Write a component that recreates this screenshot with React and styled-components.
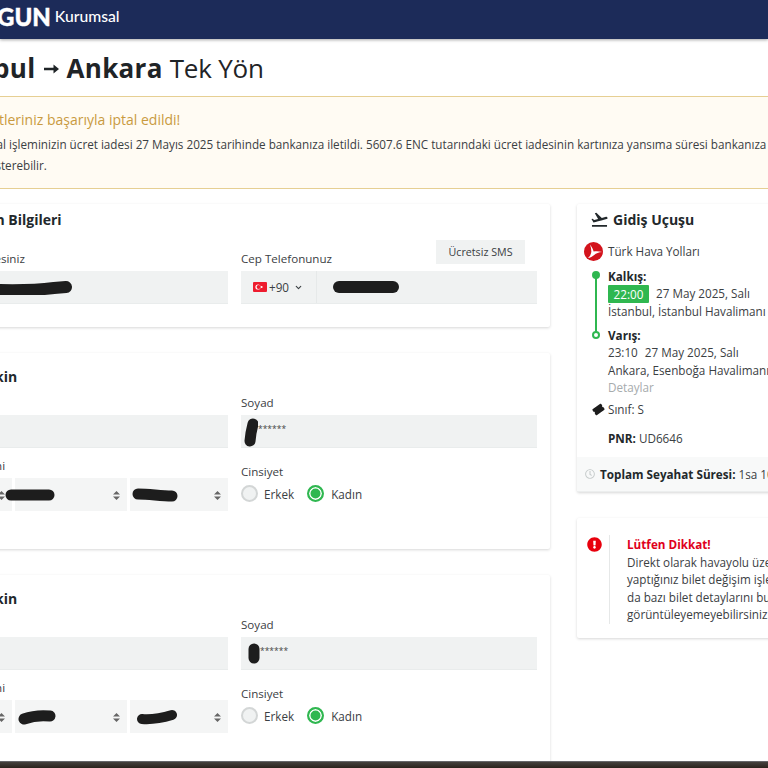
import React from "react";
import styled, { createGlobalStyle } from "styled-components";
import { MdFlightTakeoff } from "react-icons/md";
import { FaRegClock, FaExclamationCircle } from "react-icons/fa";
import { FaTicketSimple } from "react-icons/fa6";
import { LuChevronDown } from "react-icons/lu";

const Global = createGlobalStyle`
  html, body { margin: 0; padding: 0; background: #fff; }
  body { font-family: "Open Sans", "Noto Sans", sans-serif; color: #333a3d; }
`;

const Viewport = styled.div`
  position: relative;
  width: 768px;
  height: 768px;
  overflow: hidden;
  background: #fff;
`;

const Header = styled.header`
  height: 39px;
  box-sizing: border-box;
  padding-bottom: 7px;
  background: #1c2b59;
  box-shadow: 0 1px 3px rgba(0, 0, 0, 0.35);
  display: flex;
  align-items: center;
  overflow: hidden;
`;

const Brand = styled.span`
  font-family: "Lato", sans-serif;
  font-weight: 900;
  font-size: 24px;
  color: #fff;
  margin-left: -3px;
  -webkit-text-stroke: 0.4px #fff;
`;

const BrandSub = styled.span`
  font-family: "Lato", sans-serif;
  font-weight: 500;
  font-size: 15.7px;
  color: #fff;
  margin-left: 4px;
`;

const TitleBar = styled.div`
  height: 57px;
  display: flex;
  align-items: center;
  margin-left: -74px;
  white-space: nowrap;
  font-size: 26px;
  color: #1f2427;
`;

const Strong = styled.strong`
  font-weight: 700;
  letter-spacing: 0.3px;
`;

const RouteArrow = styled.svg`
  width: 15px;
  height: 10px;
  margin: 2px 8px 0;
  flex: none;
`;

const Light = styled.span`
  margin-left: 7px;
  letter-spacing: -0.2px;
`;

const Notice = styled.section`
  box-sizing: border-box;
  height: 93px;
  border-top: 1px solid #e6cf93;
  border-bottom: 1px solid #e6cf93;
  background: #fffbf3;
  white-space: nowrap;
  overflow: hidden;
`;

const NoticeTitle = styled.div`
  font-size: 14px;
  line-height: 20px;
  color: #c99a3f;
  margin: 13px 0 4px -25px;
`;

const NoticeText = styled.div`
  font-size: 11.7px;
  line-height: 21px;
  color: #3b4043;
  margin-left: -18px;
`;

const Columns = styled.div`
  display: flex;
  align-items: flex-start;
  margin: 15px 0 0 -81px;
  gap: 27px;
  width: 1000px;
`;

const Left = styled.div`
  width: 631px;
  display: flex;
  flex-direction: column;
  gap: 26px;
  flex: none;
`;

const Right = styled.aside`
  width: 300px;
  flex: none;
  display: flex;
  flex-direction: column;
  gap: 26px;
`;

const Card = styled.div`
  background: #fff;
  box-shadow: 0 1px 3px rgba(0, 0, 0, 0.16);
  border-radius: 2px;
`;

const FormCard = styled(Card)`
  padding: ${(p) => p.$padTop}px 13px 0;
  height: ${(p) => p.$h}px;
  box-sizing: border-box;
`;

const CardTitle = styled.h3`
  margin: 0 0 0 ${(p) => p.$indent || 0}px;
  font-size: 14px;
  line-height: 20px;
  font-weight: 700;
  color: #22282b;
  white-space: nowrap;
`;

const Grid = styled.div`
  display: grid;
  grid-template-columns: 296px 296px;
  column-gap: 13px;
  align-items: end;
  margin-top: ${(p) => p.$top || 0}px;
`;

const LabelRow = styled.div`
  display: flex;
  align-items: flex-end;
  justify-content: space-between;
  height: ${(p) => p.$h || 31}px;
`;

const Label = styled.label`
  display: block;
  font-size: 11.6px;
  line-height: 16px;
  color: #3b4043;
  margin-bottom: ${(p) => p.$mb ?? 4}px;
`;

const SmsButton = styled.button`
  width: 89px;
  height: 24px;
  margin: 0 12px 7px 0;
  border: 0;
  padding: 0;
  background: #f0f2f2;
  font: 400 10.7px "Open Sans", sans-serif;
  color: #3b4043;
`;

const Input = styled.div`
  height: 33px;
  box-sizing: border-box;
  background: #f0f2f2;
  border-bottom: 1px solid #e9ecec;
  display: flex;
  align-items: center;
  padding-left: ${(p) => p.$pad ?? 0}px;
  font-size: 11.7px;
  color: #3b4043;
`;

const Dial = styled.div`
  width: 76px;
  height: 100%;
  box-sizing: border-box;
  padding-left: 12px;
  display: flex;
  align-items: center;
  gap: 2px;
  border-right: 1px solid #e6e9e9;
  flex: none;
`;

const DialChevron = styled(LuChevronDown)`
  margin-left: 3px;
`;

const PhoneMask = styled.div`
  margin-left: 16px;
  display: flex;
`;

const Stars = styled.span`
  font-size: 8.5px;
  color: #444;
  align-self: flex-start;
  margin-top: 8px;
`;

const SelectRow = styled.div`
  display: grid;
  grid-template-columns: 80px 112px 98px;
  column-gap: 3px;
`;

const Select = styled.div`
  position: relative;
  height: 33px;
  background: #f4f5f5;
  display: flex;
  align-items: center;
`;

const Updown = styled.svg`
  position: absolute;
  right: 7px;
  top: 13px;
  width: 7px;
  height: 9px;
`;

const Radios = styled.div`
  display: flex;
  align-items: center;
  height: 31px;
  margin-bottom: 2px;
  font-size: 11.7px;
  color: #3b4043;
`;

const Radio = styled.span`
  width: 17px;
  height: 17px;
  border-radius: 50%;
  box-sizing: border-box;
  border: 2px solid ${(p) => (p.$on ? "#2fb750" : "#d3d6d6")};
  background: ${(p) => (p.$on ? "#2fb750" : "#f0f2f2")};
  box-shadow: ${(p) => (p.$on ? "inset 0 0 0 1.5px #fff" : "none")};
  margin-right: ${(p) => (p.$on ? 7 : 6)}px;
  flex: none;
`;

const RadioText = styled.span`
  margin-right: 13px;
`;

const Flight = styled(Card)`
  padding-top: 5px;
  height: 288px;
  box-sizing: border-box;
  display: flex;
  flex-direction: column;
  font-size: 11.7px;
  color: #3b4043;
  white-space: nowrap;
`;

const FlightHead = styled.div`
  display: flex;
  align-items: center;
  height: 20px;
  padding-left: 13px;
  gap: 4px;
  font-size: 14px;
  font-weight: 700;
  color: #22282b;
`;

const Airline = styled.div`
  display: flex;
  align-items: center;
  height: 20px;
  margin-top: 12px;
  padding-left: 7px;
  gap: 5px;
`;

const Timeline = styled.div`
  display: grid;
  grid-template-columns: 31px 1fr;
  margin-top: 7px;
`;

const Rail = styled.div`
  position: relative;
  height: 74px;
`;

const RailLine = styled.span`
  position: absolute;
  left: 18px;
  top: 7px;
  width: 2px;
  height: 58px;
  background: #2fb750;
`;

const RailDot = styled.span`
  position: absolute;
  left: 15px;
  width: 8px;
  height: 8px;
  border-radius: 50%;
  box-sizing: border-box;
  top: ${(p) => p.$top}px;
  border: 2px solid #2fb750;
  background: ${(p) => (p.$fill ? "#2fb750" : "#fff")};
`;

const Stop = styled.div`
  line-height: 17.5px;
`;

const StopTitle = styled.div`
  font-weight: 700;
  color: #22282b;
  line-height: 17px;
`;

const TimeLine = styled.div`
  display: flex;
  align-items: center;
  gap: 7px;
  min-height: 18px;
`;

const TimeBadge = styled.span`
  width: 41px;
  height: 18px;
  line-height: 18px;
  background: #2fb750;
  color: #fff;
  text-align: center;
  border-radius: 1px;
`;

const StopGap = styled.div`
  height: 6px;
`;

const Muted = styled.div`
  color: #a6abad;
  line-height: 17px;
`;

const ClassRow = styled.div`
  display: flex;
  align-items: center;
  height: 18px;
  margin-top: 4px;
  padding-left: 16px;
  gap: 4px;
`;

const TicketIcon = styled(FaTicketSimple)`
  transform: rotate(-35deg);
  color: #1d1d1d;
`;

const Pnr = styled.div`
  margin-top: 11px;
  padding-left: 31px;
  line-height: 18px;
`;

const Bold = styled.strong`
  font-weight: 700;
  color: #22282b;
`;

const FlightFoot = styled.div`
  margin-top: auto;
  height: 35px;
  box-sizing: border-box;
  background: #f8f9f9;
  display: flex;
  align-items: center;
  padding-left: 8px;
  gap: 5px;
  border-bottom: 1px solid #eceeee;
`;

const Warning = styled(Card)`
  height: 120px;
  box-sizing: border-box;
  padding: 17px 0 0 10px;
  display: flex;
  align-items: flex-start;
  font-size: 11.7px;
  color: #3b4043;
  white-space: nowrap;
`;

const WarnIcon = styled.div`
  width: 23px;
  padding-top: 2px;
  color: #e8000d;
  display: flex;
  height: 89px;
  box-sizing: border-box;
  border-right: 1px solid #e6e8e8;
  flex: none;
`;

const WarnBody = styled.div`
  margin: 1px 0 0 17px;
  line-height: 17.6px;
`;

const WarnTitle = styled.div`
  color: #e0001b;
  font-weight: 700;
`;

const Strip = styled.div`
  position: absolute;
  left: 0;
  right: 0;
  bottom: 0;
  height: 7px;
  box-sizing: border-box;
  background: linear-gradient(180deg, #45413d 0%, #3a3531 40%, #2b231c 100%);
  border-top: 1px solid #66666a;
`;

const MaskSvg = styled.svg`
  display: block;
  flex: none;
  margin-left: ${(p) => p.$ml || 0}px;
`;

const Scribble = ({ w, h, d, sw = 12, ml }) => (
  <MaskSvg $ml={ml} width={w} height={h} viewBox={`0 0 ${w} ${h}`}>
    <path d={d} fill="none" stroke="#1d1d1d" strokeWidth={sw} strokeLinecap="round" strokeLinejoin="round" />
  </MaskSvg>
);

const Arrows = () => (
  <Updown viewBox="0 0 7 9">
    <path d="M3.5 0 7 3.4H0zM3.5 9 0 5.6h7z" fill="#666" />
  </Updown>
);

const Flag = () => (
  <svg width="14" height="10" viewBox="0 0 14 10" style={{ flex: "none" }}>
    <rect width="14" height="10" rx="1" fill="#ee1c2e" />
    <circle cx="5" cy="5" r="2.6" fill="#fff" />
    <circle cx="5.7" cy="5" r="2.1" fill="#ee1c2e" />
    <circle cx="8.6" cy="5" r="1" fill="#fff" />
  </svg>
);

const ThyLogo = () => (
  <svg width="19" height="19" viewBox="0 0 19 19" style={{ flex: "none" }}>
    <circle cx="9.5" cy="9.5" r="9.5" fill="#d3131c" />
    <path d="M6 2.500c2 2.800 3.200 5 3.600 7 2.800-.5 5.800-.3 8.600.6-3.500.3-6 1.200-8 2.900-1.800 1.500-3.700 2.700-6.400 3.100 1.900-1.700 3.300-3.500 3.500-6 .1-2.500-.4-5-1.300-7.600z" fill="#fff" />
  </svg>
);

const Passenger = ({ title, monthMask, yearMask, soyadMask }) => (
  <FormCard $h={196} $padTop={14}>
    <CardTitle $indent={13}>{title}</CardTitle>
    <Grid $top={8}>
      <div>
        <Label>Ad</Label>
        <Input />
      </div>
      <div>
        <Label>Soyad</Label>
        <Input $pad={2}>
          {soyadMask}
          <Stars>******</Stars>
        </Input>
      </div>
    </Grid>
    <Grid $top={10}>
      <div>
        <LabelRow $h={20}>
          <Label $mb={4}>Doğum Tarihi</Label>
        </LabelRow>
        <SelectRow>
          <Select>
            <Arrows />
          </Select>
          <Select>{monthMask}<Arrows /></Select>
          <Select>{yearMask}<Arrows /></Select>
        </SelectRow>
      </div>
      <div>
        <Label $mb={-2}>Cinsiyet</Label>
        <Radios>
          <Radio />
          <RadioText>Erkek</RadioText>
          <Radio $on />
          <RadioText>Kadın</RadioText>
        </Radios>
      </div>
    </Grid>
  </FormCard>
);

export default function App() {
  return (
    <Viewport>
      <Global />
      <Header>
        <Brand>GUN</Brand>
        <BrandSub>Kurumsal</BrandSub>
      </Header>
      <TitleBar>
        <Strong>İstanbul</Strong>
        <RouteArrow viewBox="0 0 15 10">
          <path d="M0 3.800h9.500V0.500L15 5l-5.500 4.500V6.200H0z" fill="#1f2427" />
        </RouteArrow>
        <Strong>Ankara</Strong>
        <Light>Tek Yön</Light>
      </TitleBar>
      <Notice>
        <NoticeTitle>Biletleriniz başarıyla iptal edildi!</NoticeTitle>
        <NoticeText>
          İptal işleminizin ücret iadesi 27 Mayıs 2025 tarihinde bankanıza iletildi. 5607.6 ENC tutarındaki ücret iadesinin kartınıza yansıma süresi bankanıza göre değişiklik
          <br />
          gösterebilir.
        </NoticeText>
      </Notice>
      <Columns>
        <Left>
          <FormCard $h={123} $padTop={6}>
            <CardTitle $indent={7}>Yolcunun Bilgileri</CardTitle>
            <Grid $top={10}>
              <div>
                <LabelRow $h={31}>
                  <Label>E-Posta Adresiniz</Label>
                </LabelRow>
                <Input $pad={36}>
                  <Scribble w={104} h={16} d="M6 10 C40 12 70 11 86 9 L98 8" sw={12} />
                </Input>
              </div>
              <div>
                <LabelRow $h={31}>
                  <Label>Cep Telefonunuz</Label>
                  <SmsButton>Ücretsiz SMS</SmsButton>
                </LabelRow>
                <Input>
                  <Dial>
                    <Flag />
                    +90
                    <DialChevron size={9} strokeWidth={3} />
                  </Dial>
                  <PhoneMask>
                    <Scribble w={66} h={14} d="M6 7 L60 7" sw={12} />
                  </PhoneMask>
                </Input>
              </div>
            </Grid>
          </FormCard>
          <Passenger
            title="1. Yetişkin"
            soyadMask={<Scribble w={15} h={33} d="M10 9 L8 18 L7 26" sw={11} />}
            monthMask={<Scribble w={50} h={14} d="M6 7 L44 7" sw={11} ml={-10} />}
            yearMask={<Scribble w={46} h={14} d="M6 6 C18 6 28 8 40 8" sw={11} ml={2} />}
          />
          <Passenger
            title="2. Yetişkin"
            soyadMask={<Scribble w={15} h={33} d="M9 12 L9 21" sw={11} ml={2} />}
            monthMask={<Scribble w={38} h={16} d="M6 10 C14 7 22 6 32 7" sw={11} ml={3} />}
            yearMask={<Scribble w={42} h={16} d="M6 10 C18 11 26 9 36 6" sw={10} ml={6} />}
          />
        </Left>
        <Right>
          <Flight>
            <FlightHead>
              <MdFlightTakeoff size={19} color="#22282b" />
              <span>Gidiş Uçuşu</span>
            </FlightHead>
            <Airline>
              <ThyLogo />
              Türk Hava Yolları
            </Airline>
            <Timeline>
              <Rail>
                <RailLine />
                <RailDot $top={3} $fill />
                <RailDot $top={63} />
              </Rail>
              <div>
                <Stop>
                  <StopTitle>Kalkış:</StopTitle>
                  <TimeLine>
                    <TimeBadge>22:00</TimeBadge>
                    <span>27 May 2025, Salı</span>
                  </TimeLine>
                  <div>İstanbul, İstanbul Havalimanı</div>
                </Stop>
                <StopGap />
                <Stop>
                  <StopTitle>Varış:</StopTitle>
                  <TimeLine>
                    <span>23:10</span>
                    <span>27 May 2025, Salı</span>
                  </TimeLine>
                  <div>Ankara, Esenboğa Havalimanı</div>
                  <Muted>Detaylar</Muted>
                </Stop>
              </div>
            </Timeline>
            <ClassRow>
              <TicketIcon size={11} />
              <span>Sınıf: S</span>
            </ClassRow>
            <Pnr>
              <Bold>PNR:</Bold> UD6646
            </Pnr>
            <FlightFoot>
              <FaRegClock size={10} color="#c7cccc" />
              <span>
                <Bold>Toplam Seyahat Süresi:</Bold> 1sa 10dk
              </span>
            </FlightFoot>
          </Flight>
          <Warning>
            <WarnIcon>
              <FaExclamationCircle size={15} />
            </WarnIcon>
            <WarnBody>
              <WarnTitle>Lütfen Dikkat!</WarnTitle>
              Direkt olarak havayolu üzerinden
              <br />
              yaptığınız bilet değişim işlemlerinde ya
              <br />
              da bazı bilet detaylarını burada
              <br />
              görüntüleyemeyebilirsiniz.
            </WarnBody>
          </Warning>
        </Right>
      </Columns>
      <Strip />
    </Viewport>
  );
}
